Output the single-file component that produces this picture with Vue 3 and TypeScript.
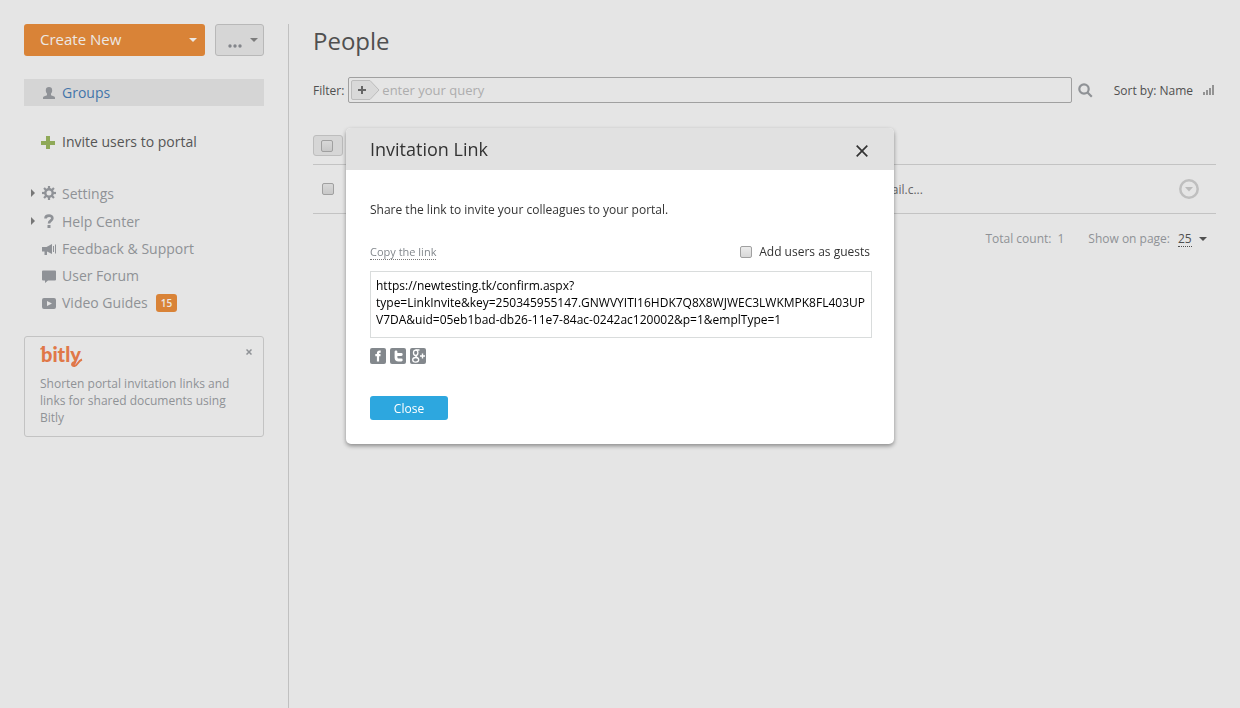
<script setup lang="ts">
import { ref } from 'vue'

interface NavItem {
  label: string
  icon: string
  expandable?: boolean
  badge?: number
}

const navItems: NavItem[] = [
  { label: 'Settings', icon: 'gear', expandable: true },
  { label: 'Help Center', icon: 'help', expandable: true },
  { label: 'Feedback & Support', icon: 'horn' },
  { label: 'User Forum', icon: 'forum' },
  { label: 'Video Guides', icon: 'video', badge: 15 },
]

const teeth = [0, 45, 90, 135, 180, 225, 270, 315]
const dialogOpen = ref(true)
const query = ref('')
const asGuests = ref(false)
const pageSize = ref('25')
const link = ref(
  'https://newtesting.tk/confirm.aspx?type=LinkInvite&key=250345955147.GNWVYITI16HDK7Q8X8WJWEC3LWKMPK8FL403UPV7DA&uid=05eb1bad-db26-11e7-84ac-0242ac120002&p=1&emplType=1',
)
</script>

<template>
  <div class="page">
    <aside class="sidebar">
      <div class="actions">
        <button class="create" type="button">
          <span>Create New</span>
          <svg class="caret" viewBox="0 0 8 4"><path d="M0 0h8L4 4z" /></svg>
        </button>
        <button class="more" type="button" aria-label="More actions">
          <svg class="dots" viewBox="0 0 14 4">
            <circle cx="2" cy="2" r="1.7" /><circle cx="7" cy="2" r="1.7" /><circle cx="12" cy="2" r="1.7" />
          </svg>
          <svg class="caret" viewBox="0 0 8 4"><path d="M0 0h8L4 4z" /></svg>
        </button>
      </div>

      <nav>
        <a class="item groups" href="#">
          <span class="arrow"></span>
          <svg class="icon" viewBox="0 0 14 14">
            <path d="M7 1c2 0 3.200 1.200 3.200 3.200 0 1.300-.4 2.500-1.200 3.300v1.700l3.200 1.200c.6.300.8.800.8 1.600v1H1v-1c0-.8.2-1.300.8-1.600L5 9.200V7.500C4.200 6.700 3.800 5.500 3.800 4.200 3.800 2.200 5 1 7 1z" />
          </svg>
          <span>Groups</span>
        </a>
        <a class="item invite" href="#">
          <span class="arrow"></span>
          <svg class="icon" viewBox="0 0 14 14"><path d="M4 1h4v5h5v4H8v4H4v-4H-1V6h5z" /></svg>
          <span>Invite users to portal</span>
        </a>
        <ul>
          <li v-for="item in navItems" :key="item.label">
            <a class="item" :class="{ tall: item.expandable }" href="#">
              <span class="arrow">
                <svg v-if="item.expandable" viewBox="0 0 4 8"><path d="M0 0l4 4-4 4z" /></svg>
              </span>
              <svg v-if="item.icon === 'gear'" class="icon" viewBox="0 0 14 14">
                <circle cx="7" cy="7" r="3.7" fill="none" stroke="currentColor" stroke-width="2.400" />
                <rect v-for="t in teeth" :key="t" x="5.900" y="0" width="2.200" height="3" :transform="`rotate(${t} 7 7)`" />
              </svg>
              <svg v-else-if="item.icon === 'help'" class="icon" viewBox="0 0 14 14">
                <path d="M3.500 4.500C3.500 2.500 5 1.600 7 1.600s3.400 1 3.400 2.700c0 2.400-3.400 2.300-3.400 5.200" fill="none" stroke="currentColor" stroke-width="2.600" />
                <rect x="5.500" y="11" width="3" height="3" />
              </svg>
              <svg v-else-if="item.icon === 'horn'" class="icon" viewBox="0 0 14 14">
                <path d="M0 5h4.500L10 2v10L5 9.500V13H2.500V9.500H0z" />
                <path d="M11.500 4v6M13.500 2.500v9" stroke="currentColor" fill="none" />
              </svg>
              <svg v-else-if="item.icon === 'forum'" class="icon" viewBox="0 0 14 14">
                <path d="M1 1.500h12a1 1 0 0 1 1 1v8a1 1 0 0 1-1 1H6L3 14v-2.500H1a1 1 0 0 1-1-1v-8a1 1 0 0 1 1-1z" />
              </svg>
              <svg v-else class="icon" viewBox="0 0 14 14">
                <path fill-rule="evenodd" d="M2 2h10a2 2 0 0 1 2 2v7a2 2 0 0 1-2 2H2a2 2 0 0 1-2-2V4a2 2 0 0 1 2-2zM5 5v5l5-2.500z" />
              </svg>
              <span>{{ item.label }}</span>
              <span v-if="item.badge" class="badge">{{ item.badge }}</span>
            </a>
          </li>
        </ul>
      </nav>

      <section class="promo">
        <div class="promo-head">
          <svg class="bitly" viewBox="0 0 44 22">
            <text x="1" y="15">bitly</text>
            <path d="M1 2.500Q1 1 4 1M36 15C31 15 31 19.500 34.500 19 38 18.500 37.500 14 42 12.500" />
          </svg>
          <button type="button" aria-label="Dismiss">
            <svg viewBox="0 0 6 6"><path d="M.5.5l5 5M5.500.5l-5 5" /></svg>
          </button>
        </div>
        <p>Shorten portal invitation links and links for shared documents using Bitly</p>
      </section>
    </aside>

    <main class="main">
      <h1>People</h1>
      <div class="filter">
        <label for="query">Filter:</label>
        <div class="filter-box">
          <button type="button" class="tag" aria-label="Add filter">
            <svg viewBox="0 0 29 20">
              <path class="tag-shape" d="M2 .5h17l9 9.500-9 9.500H2A1.500 1.500 0 0 1 .5 18V2A1.500 1.500 0 0 1 2 .5z" />
              <path class="tag-plus" d="M11 6v8M7 10h8" />
            </svg>
          </button>
          <input id="query" v-model="query" type="text" placeholder="enter your query" />
        </div>
        <button type="button" class="search" aria-label="Search">
          <svg viewBox="0 0 15 15">
            <circle cx="6" cy="6" r="4.700" /><path d="M9.500 9.500l4.300 4.300" />
          </svg>
        </button>
        <button type="button" class="sort">Sort by: Name</button>
        <svg class="bars" viewBox="0 0 11 10">
          <path d="M0 7h2v3H0zM3 5h2v5H3zM6 3h2v7H6zM9 0h2v10H9z" />
        </svg>
      </div>

      <div class="toolbar">
        <label class="select-all"><input type="checkbox" aria-label="Select all" /></label>
      </div>

      <table>
        <tbody>
          <tr>
            <td class="pick"><input type="checkbox" aria-label="Select person" /></td>
            <td class="mail">mail.c...</td>
            <td class="menu">
              <button type="button" aria-label="Person actions">
                <svg viewBox="0 0 20 20">
                  <circle cx="10" cy="10" r="8.700" /><path d="M6 8h8l-4 4.500z" />
                </svg>
              </button>
            </td>
          </tr>
        </tbody>
      </table>

      <div class="paging">
        <span>Total count:</span>
        <span class="total">1</span>
        <label for="page-size">Show on page:</label>
        <select id="page-size" v-model="pageSize">
          <option>25</option>
          <option>50</option>
          <option>75</option>
          <option>100</option>
        </select>
        <svg class="caret" viewBox="0 0 8 4"><path d="M0 0h8L4 4z" /></svg>
      </div>
    </main>

    <div v-if="dialogOpen" class="overlay">
      <section class="dialog" role="dialog" aria-labelledby="dialog-title">
        <header>
          <h2 id="dialog-title">Invitation Link</h2>
          <button type="button" aria-label="Close dialog" @click="dialogOpen = false">
            <svg viewBox="0 0 12 12"><path d="M.7.7l10.600 10.600M11.300.7L.7 11.300" /></svg>
          </button>
        </header>
        <div class="body">
          <p>Share the link to invite your colleagues to your portal.</p>
          <div class="options">
            <button type="button" class="copy">Copy the link</button>
            <label class="guests"><input v-model="asGuests" type="checkbox" /><span>Add users as guests</span></label>
          </div>
          <textarea v-model="link" aria-label="Invitation link" spellcheck="false"></textarea>
          <div class="social">
            <a href="#" aria-label="Facebook">
              <svg viewBox="0 0 16 16">
                <rect width="16" height="16" rx="2" />
                <path d="M10.700 3.700H9.700Q8 3.700 8 5.500V13.500M5.300 7.200H10.500" stroke-width="2.200" />
              </svg>
            </a>
            <a href="#" aria-label="Twitter">
              <svg viewBox="0 0 16 16">
                <rect width="16" height="16" rx="2" />
                <path d="M6 3.800V9.500Q6 12 8.500 12H11.300M6 6.500H11.300" stroke-width="2.800" stroke-linecap="round" />
              </svg>
            </a>
            <a href="#" aria-label="Google Plus">
              <svg viewBox="0 0 16 16">
                <rect width="16" height="16" rx="2" />
                <ellipse cx="5.700" cy="4.800" rx="2.200" ry="2.700" stroke-width="1.300" />
                <ellipse cx="5.700" cy="11.800" rx="3" ry="2.300" stroke-width="1.300" />
                <path d="M5.500 2H9.500M6.500 7.500Q5 8.300 7.500 9.700M12.500 5.500v5M10 8h5" stroke-width="1.400" />
              </svg>
            </a>
          </div>
          <button type="button" class="close" @click="dialogOpen = false">Close</button>
        </div>
      </section>
    </div>
  </div>
</template>

<style>
body {
  margin: 0;
  background: #e5e5e5;
}
</style>

<style scoped>
.page {
  box-sizing: border-box;
  display: flex;
  gap: 24px;
  min-height: 100vh;
  padding: 24px 24px 0;
  font: 12px/17px 'Open Sans', sans-serif;
  color: #505050;
}
h1, h2, p, ul {
  margin: 0;
  padding: 0;
  font-weight: 400;
}
ul { list-style: none; }
a { color: inherit; text-decoration: none; }
svg { display: block; flex: none; }
button {
  padding: 0;
  border: 0;
  background: none;
  font: inherit;
  color: inherit;
  cursor: pointer;
}
input[type='checkbox'] {
  appearance: none;
  box-sizing: border-box;
  flex: none;
  width: 12px;
  height: 12px;
  margin: 0;
  border: 1px solid #a0a0a0;
  border-radius: 2px;
  background: linear-gradient(#d8d8d8, #c8c8c8);
}
.caret { width: 8px; height: 4px; fill: currentColor; }

.sidebar { flex: none; width: 240px; }
.actions { display: flex; gap: 10px; height: 32px; }
.create {
  flex: 1;
  display: flex;
  align-items: center;
  justify-content: space-between;
  padding: 0 8px 2px 16px;
  border-radius: 3px;
  background: #d98337;
  color: #ece8e4;
  font-size: 15px;
}
.create .caret { margin-top: 2px; }
.more {
  box-sizing: border-box;
  display: flex;
  align-items: center;
  justify-content: space-between;
  width: 49px;
  padding: 0 5px 0 12px;
  border: 1px solid #b8b8b8;
  border-radius: 3px;
  background: #d6d6d6;
  color: #7c7c7c;
}
.dots { width: 14px; height: 4px; margin-top: 12px; fill: #83868b; }

.item {
  display: flex;
  align-items: center;
  height: 27px;
  padding-left: 6px;
  font-size: 14px;
  color: #8f9296;
}
.tall { height: 28px; }
.arrow { flex: none; width: 12px; }
.arrow svg { width: 4px; height: 8px; margin-left: 1px; fill: #777; }
.icon { width: 14px; height: 14px; margin-right: 6px; overflow: visible; fill: #8f9297; color: #8f9297; }
.groups { margin-top: 23px; background: #d5d5d5; color: #4475aa; }
.invite { margin: 22px 0 24px; color: #555; }
.invite .icon { fill: #8fa958; }
.badge {
  margin-left: 8px;
  padding: 0 5px;
  border-radius: 3px;
  background: #d98337;
  color: #ece8e4;
  font-size: 10px;
  font-weight: 600;
  line-height: 18px;
}
.promo {
  box-sizing: border-box;
  margin-top: 20px;
  padding: 10px 10px 10px 15px;
  border: 1px solid #c3c3c3;
  border-radius: 3px;
  color: #8f9296;
}
.promo-head { display: flex; justify-content: space-between; height: 28px; }
.promo-head button svg { width: 6px; height: 6px; fill: none; stroke: #8f9296; stroke-width: 1.5; }
.promo-head button { align-self: flex-start; padding: 2px 1px; }
.bitly {
  width: 44px;
  height: 22px;
  overflow: visible;
  font: 900 20px Lato, sans-serif;
  fill: #e07848;
}
.bitly path { fill: none; stroke: #e07848; stroke-width: 2; }
.promo p { padding-right: 16px; }

.main {
  flex: 1;
  min-width: 0;
  padding-left: 24px;
  border-left: 1px solid #c0c0c0;
}
h1 { font-size: 24px; line-height: 34px; }
.filter { display: flex; align-items: center; margin-top: 19px; }
.filter-box {
  box-sizing: border-box;
  flex: 1;
  display: flex;
  align-items: center;
  height: 26px;
  margin: 0 6px 0 4px;
  padding-left: 2px;
  border: 1px solid #a0a0a0;
  border-radius: 2px;
}
.tag svg { width: 29px; height: 20px; fill: none; }
.tag-shape { fill: #d9d9d9; stroke: #bcbcbc; }
.tag-plus { stroke: #666; stroke-width: 2; }
#query {
  flex: 1;
  min-width: 0;
  padding: 0 2px;
  border: 0;
  outline: 0;
  background: none;
  font: inherit;
  font-size: 13px;
  color: #505050;
}
#query::placeholder { color: #adadad; opacity: 1; }
.search svg { width: 15px; height: 15px; fill: none; stroke: #8f9296; stroke-width: 2.2; }
.sort { margin: 0 10px 0 21px; }
.bars { width: 11px; height: 10px; margin-right: 2px; fill: #939393; }

.toolbar { margin: 32px 0 8px; }
.select-all {
  box-sizing: border-box;
  display: flex;
  align-items: center;
  justify-content: center;
  width: 30px;
  height: 21px;
  padding-right: 2px;
  border: 1px solid #bdbdbd;
  border-radius: 3px;
  background: #d6d6d6;
}
table {
  width: 100%;
  table-layout: fixed;
  border-collapse: collapse;
  border-top: 1px solid #c3c3c3;
  border-bottom: 1px solid #c3c3c3;
}
td { height: 48px; padding: 0; }
.pick { width: 32px; }
.pick input { display: block; margin-left: 9px; }
.mail { width: 64%; text-align: right; color: #666; }
.menu svg { width: 20px; height: 20px; fill: #bbb; }
.menu circle { fill: none; stroke: #bfbfbf; stroke-width: 2.5; }
.menu button { display: block; margin: 0 17px 0 auto; }
.paging {
  display: flex;
  align-items: center;
  justify-content: flex-end;
  margin-top: 16px;
  padding-right: 9px;
  color: #8f9296;
}
.total { margin: 0 24px 0 6px; }
.paging select {
  appearance: none;
  width: 14px;
  margin: 0 7px 0 8px;
  padding: 0;
  border: 0;
  border-bottom: 1px dotted #505050;
  background: none;
  font: inherit;
  line-height: 15px;
  color: #505050;
}
.paging .caret { color: #505050; }

.overlay {
  position: fixed;
  inset: 0;
  display: flex;
  align-items: flex-start;
  justify-content: center;
  padding-top: 128px;
}
.dialog {
  width: 548px;
  border-radius: 5px;
  background: #fff;
  box-shadow: 0 2px 4px rgba(0, 0, 0, 0.4);
  color: #333;
  overflow: hidden;
}
.dialog header {
  display: flex;
  align-items: center;
  justify-content: space-between;
  height: 42px;
  padding: 0 26px 0 24px;
  background: #e1e1e1;
}
h2 { font-size: 18px; line-height: 24px; }
header svg { width: 12px; height: 12px; margin-top: 3px; fill: none; stroke: #333; stroke-width: 1.7; }
.body { padding: 31px 22px 24px 24px; }
.options {
  display: flex;
  align-items: center;
  justify-content: space-between;
  margin: 25px 2px 11px 0;
}
.copy { border-bottom: 1px dotted #777; font-size: 11px; line-height: 15px; color: #83888d; }
.guests { display: flex; align-items: center; gap: 7px; }
.guests input { background: linear-gradient(#ececec, #d8d8d8); }
textarea {
  display: block;
  box-sizing: border-box;
  width: 100%;
  height: 67px;
  padding: 5px 5px 9px;
  border: 1px solid #d9dcdc;
  outline: 0;
  resize: none;
  overflow: hidden;
  overflow-wrap: break-word;
  font: inherit;
  color: #000;
}
.social { display: flex; gap: 4px; margin: 10px 0 32px; }
.social svg { width: 16px; height: 16px; fill: none; stroke: #fff; }
.social rect { fill: #83888d; stroke: none; }
.close {
  display: block;
  width: 78px;
  height: 24px;
  border-radius: 3px;
  background: #2da7df;
  color: #fff;
}
</style>
